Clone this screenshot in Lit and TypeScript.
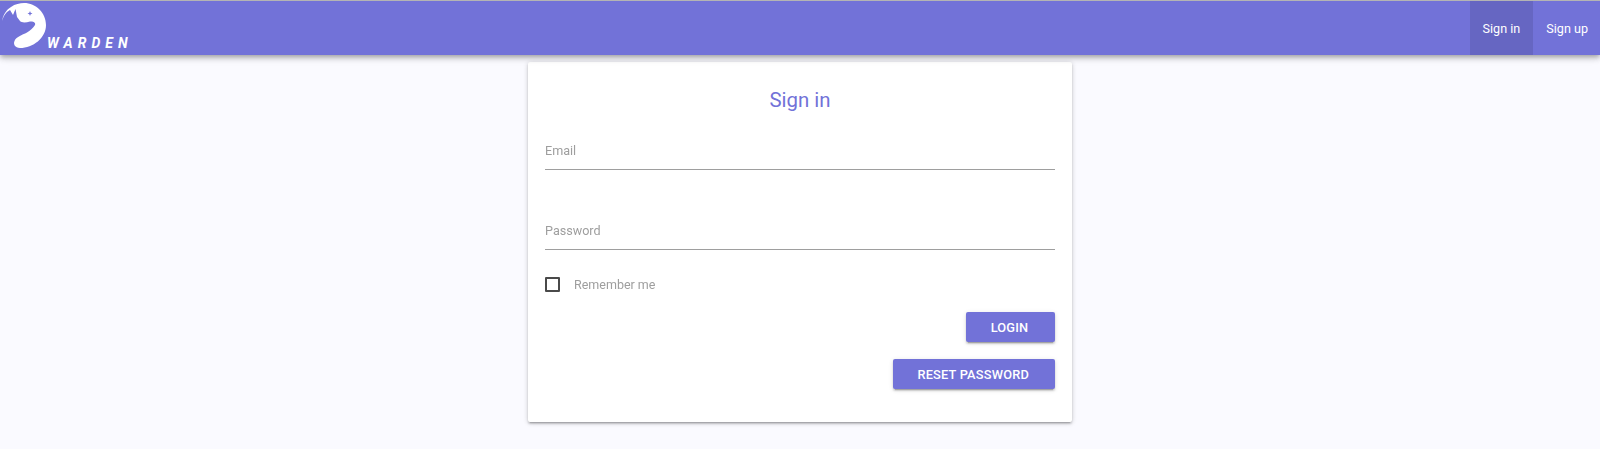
import { LitElement, html, css } from "lit";
import { customElement } from "lit/decorators.js";

@customElement("app-root")
export class AppRoot extends LitElement {
  static styles = css`
    :host { display: block; height: 449px; background: #fafaff; font-family: Roboto, "Liberation Sans", sans-serif; overflow: hidden; }
    .bar { height: 55px; box-sizing: border-box; border-top: 1px solid #b4b4b4; background: #7272d8; display: flex; justify-content: space-between; box-shadow: 0 2px 4px -1px rgba(0,0,0,.2), 0 4px 5px 0 rgba(0,0,0,.14), 0 1px 10px 0 rgba(0,0,0,.12); position: relative; }
    .brand { display: flex; align-items: flex-end; }
    .logo { width: 47px; height: 50px; display: block; flex: none; align-self: flex-start; }
    .word { font-size: 14px; font-style: italic; font-weight: 700; color: #fff; letter-spacing: 5px; line-height: 14px; margin-bottom: 5px; }
    .nav { display: flex; }
    .nav a { display: flex; align-items: center; padding: 0 12px 0 13px; color: #fff; font-size: 12.6px; }
    .nav a.active { padding: 0 13px 0 12.4px; background: rgba(0,0,0,.1); }
    main { display: flex; justify-content: center; padding-top: 7px; }
    .card { width: 544px; height: 360px; box-sizing: border-box; background: #fff; border-radius: 2px; padding: 0 17px; box-shadow: 0 1px 5px rgba(0,0,0,.2), 0 2px 2px rgba(0,0,0,.14), 0 3px 1px -2px rgba(0,0,0,.12); display: flex; flex-direction: column; }
    h1 { margin: 24px 0 0; font-size: 20.4px; line-height: 28px; font-weight: 400; color: #7272d8; text-align: center; }
    .label { will-change: transform; }
    .field { height: 26px; padding-bottom: 6px; border-bottom: 1px solid #9e9e9e; display: flex; align-items: center; color: #9e9e9e; font-size: 12.6px; box-sizing: content-box; }
    .email { margin-top: 23px; }
    .pw { margin-top: 47px; }
    .check { margin-top: 24px; display: flex; align-items: center; gap: 14px; color: #9e9e9e; font-size: 12.5px; height: 20px; }
    .box { width: 15px; height: 15px; box-sizing: border-box; border: 2px solid #4a4a4a; border-radius: 1px; }
    .actions { display: flex; flex-direction: column; align-items: flex-end; gap: 17px; margin-top: 18px; }
    button { height: 30px; min-width: 89px; border: 0; border-radius: 2px; background: #7272d8; color: #fff; font: 500 12.8px Roboto, sans-serif; letter-spacing: .2px; padding: 0 26px 0 24px; box-shadow: 0 3px 1px -2px rgba(0,0,0,.2), 0 2px 2px 0 rgba(0,0,0,.14), 0 1px 5px 0 rgba(0,0,0,.12); }
  `;
  render() {
    return html`
      <header class="bar">
        <div class="brand">
          <svg class="logo" viewBox="0 1 47 50"><path fill="#fff" d="M2 21C3 15 6 10 11 7C15 4 20 3 24 3C36 3 46 13 46 25C46 38 33 48 20 48C15 48 13 44 14.5 41C16 37 22 35 27 32.5C30 31 33 28 35 25C36 22.5 33 21 30 21.5C26 22.5 22 23 20 21L17 17L15.5 9L13 15L10 10L7 12C5 14 3 17 2 21Z"/><path fill="#7272d8" d="M30 11L30.7 12.8L32.5 13.5L30.7 14.2L30 16L29.3 14.2L27.5 13.5L29.3 12.8Z"/></svg>
          <span class="word">WARDEN</span>
        </div>
        <nav class="nav"><a class="active">Sign in</a><a>Sign up</a></nav>
      </header>
      <main>
        <section class="card">
          <h1>Sign in</h1>
          <div class="field email"><span class="label">Email</span></div>
          <div class="field pw"><span class="label">Password</span></div>
          <label class="check"><span class="box"></span><span class="label">Remember me</span></label>
          <div class="actions"><button>LOGIN</button><button>RESET PASSWORD</button></div>
        </section>
      </main>`;
  }
}
